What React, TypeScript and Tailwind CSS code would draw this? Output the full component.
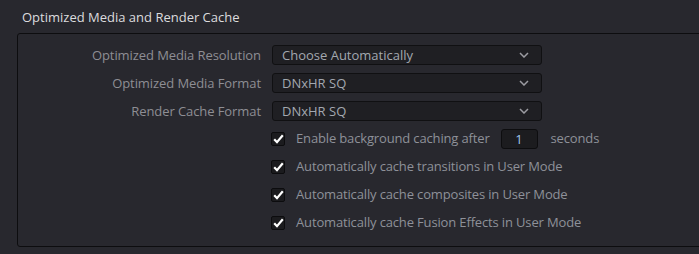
const selects = [
  { label: 'Optimized Media Resolution', value: 'Choose Automatically' },
  { label: 'Optimized Media Format', value: 'DNxHR SQ' },
  { label: 'Render Cache Format', value: 'DNxHR SQ' },
];

const checks = [
  'Automatically cache transitions in User Mode',
  'Automatically cache composites in User Mode',
  'Automatically cache Fusion Effects in User Mode',
];

function Chevron() {
  return (
    <svg width="10" height="6" viewBox="0 0 10 6" className="text-[#9c9ca2]">
      <path d="M1 1 L5 5 L9 1" fill="none" stroke="currentColor" strokeWidth="1.5" />
    </svg>
  );
}

function Checkbox() {
  return (
    <div className="w-[14px] h-[14px] shrink-0 rounded-[2px] border border-[#0c0c0e] bg-[#1b1b1e] flex items-center justify-center">
      <svg width="11" height="10" viewBox="0 0 11 10">
        <path d="M1.2 5.2 L4 8.2 L9.8 1.2" fill="none" stroke="#ffffff" strokeWidth="2.2" />
      </svg>
    </div>
  );
}

export default function App() {
  return (
    <div
      className="w-[699px] h-[254px] overflow-hidden bg-[#28282e] text-[13px]"
      style={{ fontFamily: '"Open Sans", sans-serif' }}
    >
      {/* titre */}
      <div className="pl-[22px] pt-[7px] h-[33px] text-[#dcdcde] leading-[20px]">
        Optimized Media and Render Cache
      </div>

      {/* panneau */}
      <div className="ml-[17px] w-[720px] h-[214px] border border-[#0d0d0f] rounded-[3px] pt-[11px] flex flex-col gap-[8px]">
        {selects.map((s) => (
          <div key={s.label} className="flex items-center h-[20px]">
            <div className="w-[243px] text-right text-[#8e8e94] leading-[20px] tracking-[-0.08px]">{s.label}</div>
            <div className="ml-[11px] w-[270px] h-[20px] rounded-[3px] border border-[#101012] bg-[#1f1f23] flex items-center justify-between pl-[9px] pr-[12px]">
              <span className="text-[#a3a8b0] leading-[18px]">{s.value}</span>
              <Chevron />
            </div>
          </div>
        ))}

        <div className="flex items-center h-[20px] pl-[253px]">
          <Checkbox />
          <span className="ml-[11px] text-[#8e9199] tracking-[-0.15px]">Enable background caching after</span>
          <div className="ml-[11px] w-[37px] h-[20px] rounded-[3px] border border-[#0d0d0f] bg-[#1c1c1f] flex items-center justify-center text-[#9fc4ee] leading-[18px]">
            1
          </div>
          <span className="ml-[13px] text-[#8e9199] tracking-[-0.15px]">seconds</span>
        </div>

        {checks.map((c) => (
          <div key={c} className="flex items-center h-[20px] pl-[253px]">
            <Checkbox />
            <span className="ml-[11px] text-[#8e9199] tracking-[-0.15px]">{c}</span>
          </div>
        ))}
      </div>
    </div>
  );
}
